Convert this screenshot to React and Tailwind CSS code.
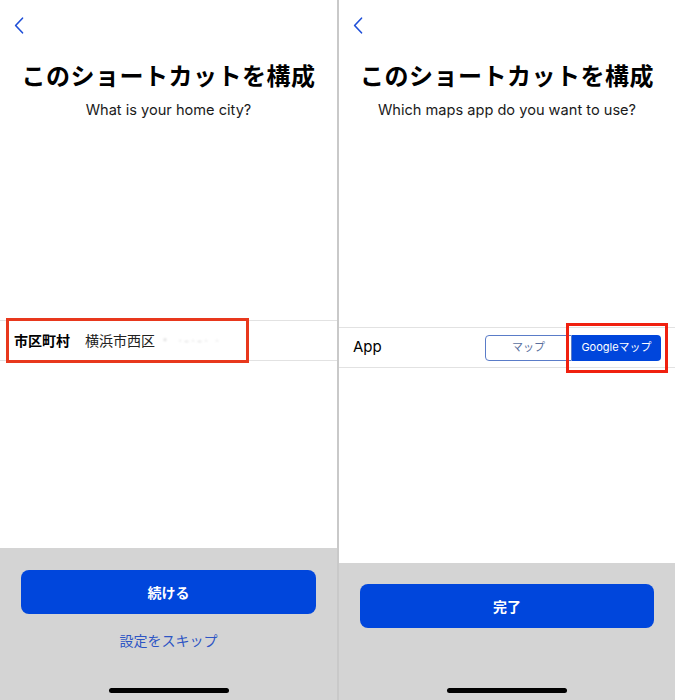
import React from 'react';

const font = "font-['Inter','Noto_Sans_CJK_JP',sans-serif]";

const Back = () => (
    <svg width="10" height="17" viewBox="0 0 10 17" fill="none" className="block">
        <path d="M8.5 1.2L1.6 8.5l6.9 7.3" stroke="#1f4fd8" strokeWidth="1.6" strokeLinecap="round" strokeLinejoin="round" />
    </svg>
);

const HomeBar = () => (
    <div className="mt-auto mb-[7px] mx-auto w-[120px] h-[5px] rounded-full bg-black" />
);

const Header = ({ subtitle }) => (
    <>
        <div className="pt-[17px] pl-[14px]">
            <Back />
        </div>
        <h1 className="mt-[27px] text-center text-[24px] leading-[32px] font-bold text-black tracking-[0.5px]">
            このショートカットを構成
        </h1>
        <p className="mt-[7px] text-center text-[14.6px] leading-[20px] text-[#1a1a1a]">{subtitle}</p>
    </>
);

const CityPanel = () => (
    <div className="w-[337px] h-[700px] flex flex-col">
        <div className="h-[548px] bg-white flex flex-col">
            <Header subtitle="What is your home city?" />
            <div className="relative mt-[200px] h-[41px] border-y border-[#e2e2e2] flex items-center pl-[14px]">
                <span className="text-[14px] font-bold text-black">市区町村</span>
                <span className="ml-[15px] text-[14px] text-[#222]">横浜市西区</span>
                <span className="ml-[4px] text-[12px] text-[#d6d6d6] blur-[1px] tracking-[2px]">・ ·-·-· ·</span>
                <div className="absolute left-[6px] top-[-3px] w-[243px] h-[45px] border-[3px] border-[#e8381d]" />
            </div>
        </div>
        <div className="flex-1 bg-[#d4d4d4] flex flex-col px-[21px] pt-[22px]">
            <button className="h-[44px] w-[295px] rounded-[8px] bg-[#0046dc] text-white text-[14px] font-bold">
                続ける
            </button>
            <p className="mt-[17px] text-center text-[14px] leading-[20px] text-[#2d55c4]">設定をスキップ</p>
            <HomeBar />
        </div>
    </div>
);

const MapsPanel = () => (
    <div className="w-[336px] h-[700px] flex flex-col">
        <div className="h-[563px] bg-white flex flex-col">
            <Header subtitle="Which maps app do you want to use?" />
            <div className="relative mt-[207px] h-[41px] border-y border-[#e2e2e2] flex items-center pl-[14px] pr-[14px]">
                <span className="text-[15px] text-black">App</span>
                <div className="ml-auto flex h-[26px]">
                    <div className="w-[87px] border border-[#5a7cc8] rounded-l-[4px] flex items-center justify-center text-[11px] text-[#5a6f9e]">
                        マップ
                    </div>
                    <div className="w-[89px] bg-[#0046dc] rounded-r-[4px] flex items-center justify-center text-[11px] text-white">
                        Googleマップ
                    </div>
                </div>
                <div className="absolute left-[227px] top-[-5px] w-[102px] h-[50px] border-[3px] border-[#f0200f]" />
            </div>
        </div>
        <div className="flex-1 bg-[#d4d4d4] flex flex-col px-[21px] pt-[21px]">
            <button className="h-[44px] w-full rounded-[8px] bg-[#0046dc] text-white text-[14px] font-bold">
                完了
            </button>
            <HomeBar />
        </div>
    </div>
);

export default function App() {
    return (
        <div className={`w-[675px] h-[700px] flex bg-white ${font}`}>
            <CityPanel />
            <div className="w-[2px] h-[700px] bg-[#c9c9c9]" />
            <MapsPanel />
        </div>
    );
}
